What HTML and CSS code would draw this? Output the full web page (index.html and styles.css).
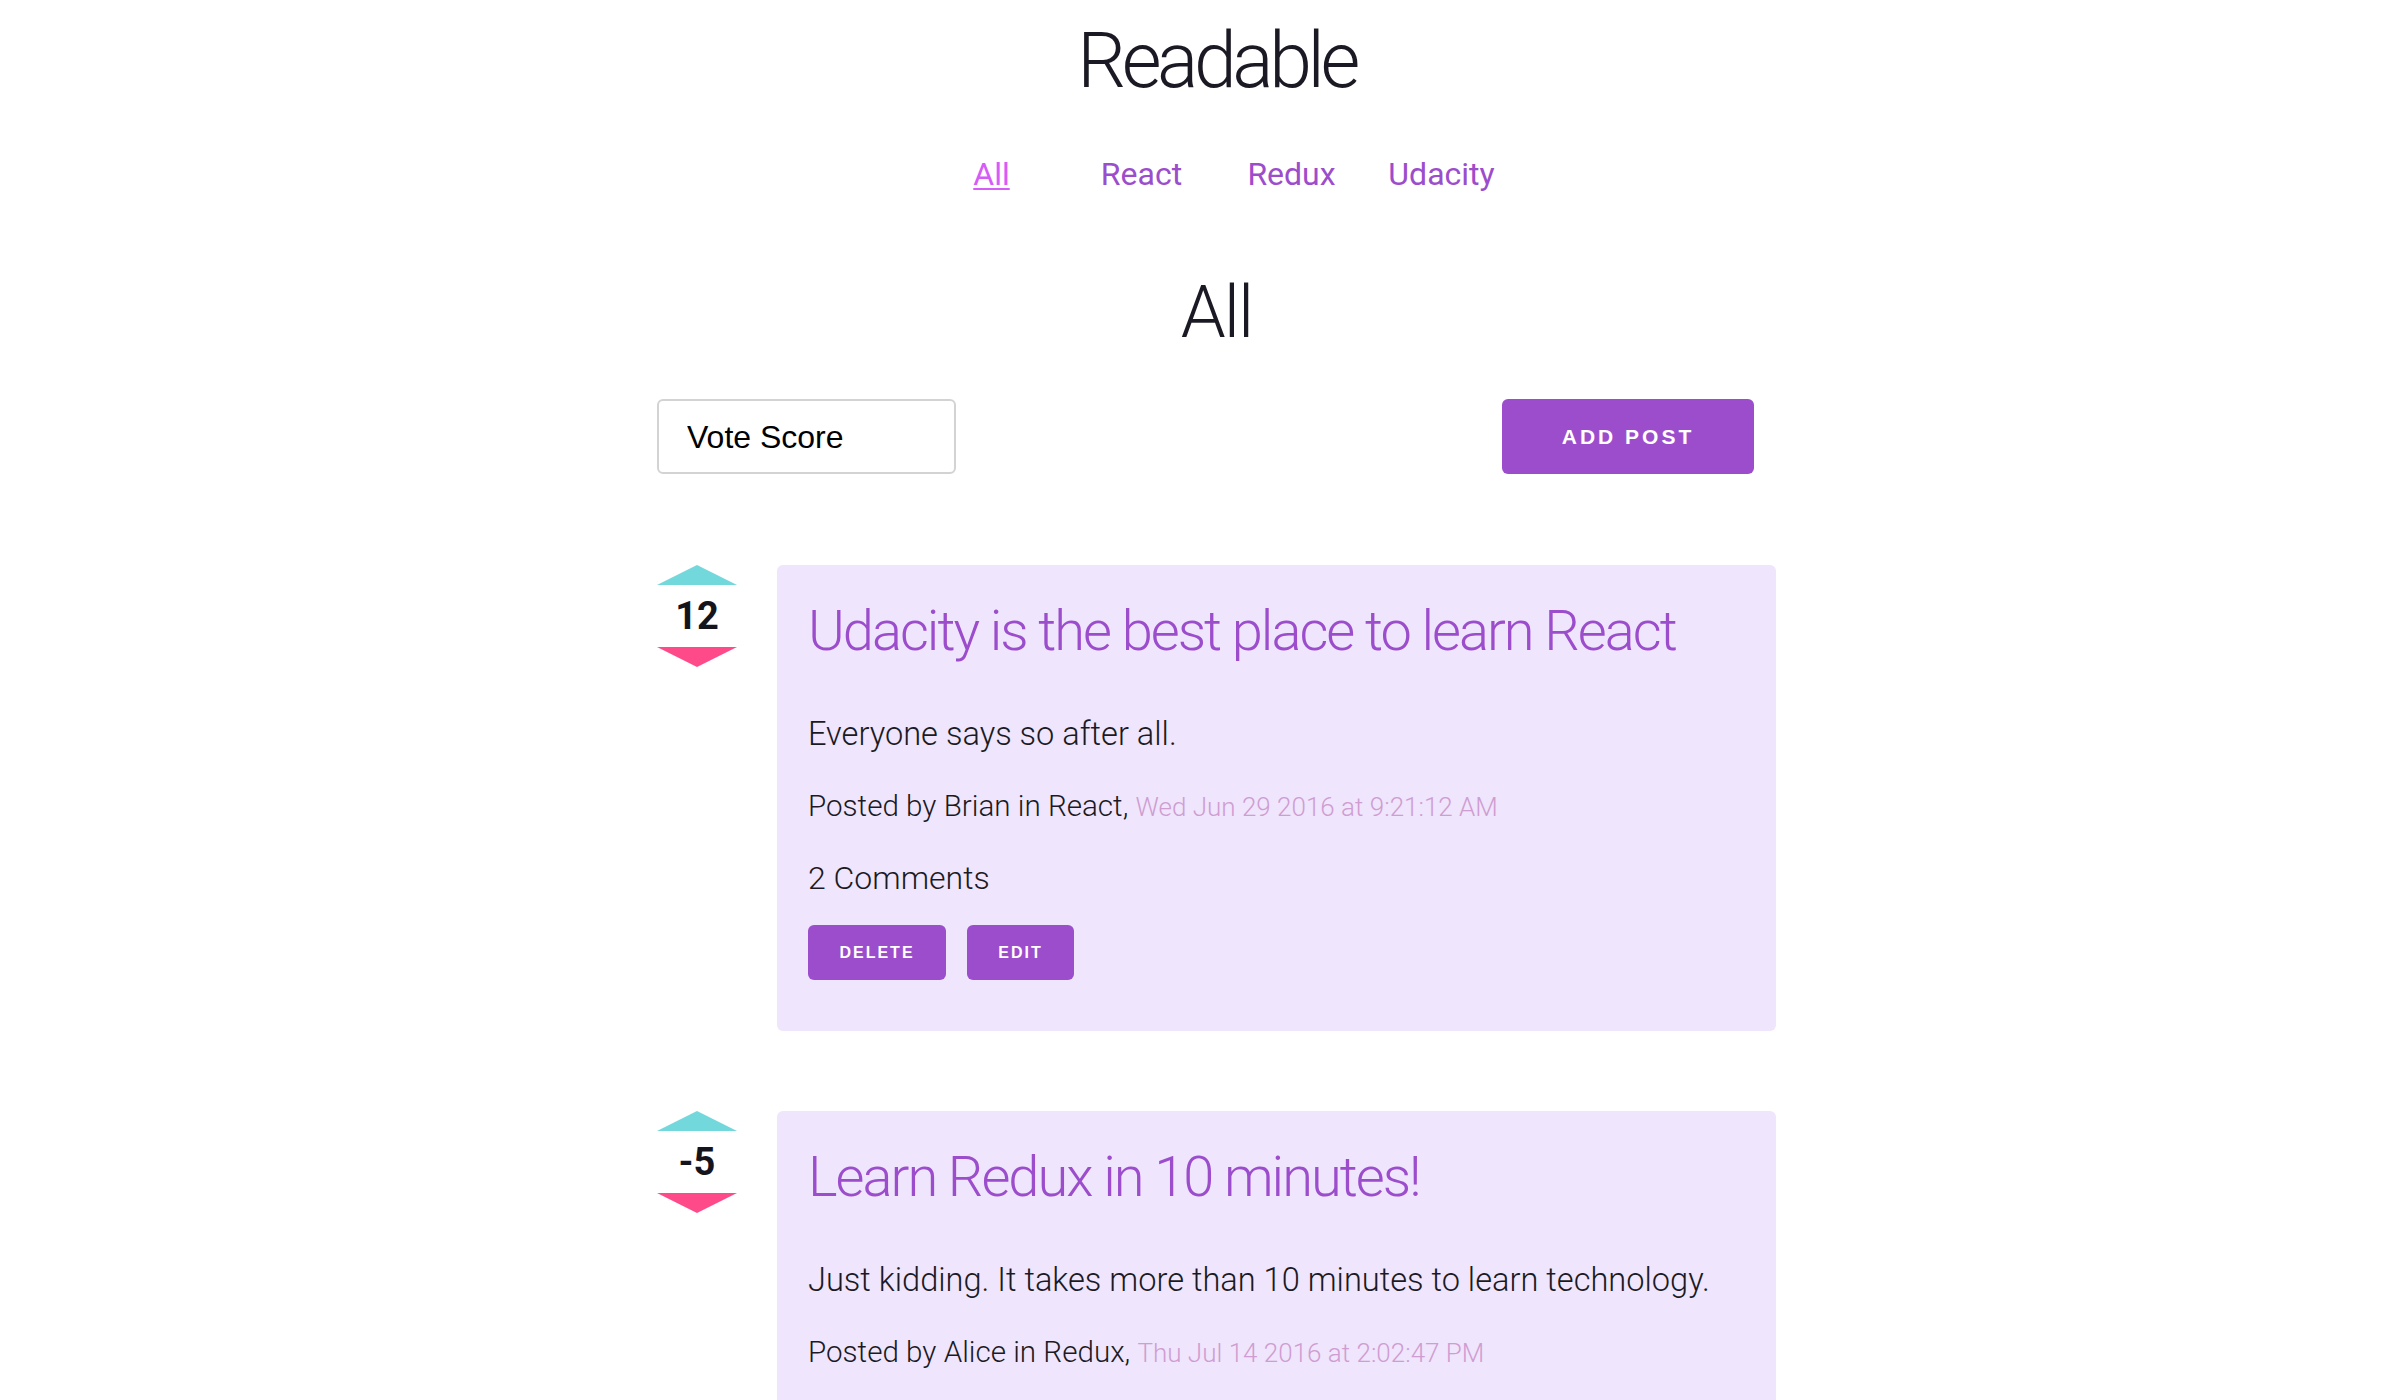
FILE: index.html
```html
<!DOCTYPE html>
<html lang="en">
<head>
<meta charset="utf-8">
<title>Readable</title>
<link rel="stylesheet" href="styles.css">
</head>
<body>
<div class="app">
  <header class="header">
    <h1 class="brand">Readable</h1>
    <nav class="nav">
      <a class="nav-link active" href="#">All</a>
      <a class="nav-link" href="#">React</a>
      <a class="nav-link" href="#">Redux</a>
      <a class="nav-link" href="#">Udacity</a>
    </nav>
  </header>
  <main class="main">
    <h2 class="category-title">All</h2>
    <div class="toolbar">
      <select class="sort-select">
        <option>Vote Score</option>
        <option>Timestamp</option>
      </select>
      <button class="btn btn-large">ADD POST</button>
    </div>
    <ul class="posts">
      <li class="post-row">
        <div class="vote">
          <span class="arrow-up"></span>
          <span class="vote-score">12</span>
          <span class="arrow-down"></span>
        </div>
        <article class="post-card">
          <h3 class="post-title">Udacity is the best place to learn React</h3>
          <p class="post-body">Everyone says so after all.</p>
          <p class="post-meta">Posted by Brian in React, <span class="post-date">Wed Jun 29 2016 at 9:21:12 AM</span></p>
          <p class="post-comments">2 Comments</p>
          <div class="post-actions">
            <button class="btn btn-small btn-delete">DELETE</button>
            <button class="btn btn-small btn-edit">EDIT</button>
          </div>
        </article>
      </li>
      <li class="post-row">
        <div class="vote">
          <span class="arrow-up"></span>
          <span class="vote-score">-5</span>
          <span class="arrow-down"></span>
        </div>
        <article class="post-card">
          <h3 class="post-title">Learn Redux in 10 minutes!</h3>
          <p class="post-body">Just kidding. It takes more than 10 minutes to learn technology.</p>
          <p class="post-meta">Posted by Alice in Redux, <span class="post-date">Thu Jul 14 2016 at 2:02:47 PM</span></p>
          <p class="post-comments">0 Comments</p>
          <div class="post-actions">
            <button class="btn btn-small btn-delete">DELETE</button>
            <button class="btn btn-small btn-edit">EDIT</button>
          </div>
        </article>
      </li>
    </ul>
  </main>
</div>
</body>
</html>
```

FILE: styles.css
```css
* {
  box-sizing: border-box;
}

html, body {
  margin: 0;
  padding: 0;
  background: #ffffff;
}

body {
  font-family: Roboto, "Noto Sans", sans-serif;
  color: #1b1a24;
  padding-left: 33px;
}

.app {
  display: flex;
  flex-direction: column;
  align-items: center;
}

.header {
  display: flex;
  flex-direction: column;
  align-items: center;
}

.brand {
  margin: 23px 0 0;
  font-size: 77px;
  line-height: 77px;
  font-weight: 300;
  letter-spacing: -4.4px;
  color: #1b1a24;
}

.nav {
  display: flex;
  margin-top: 54px;
}

.nav-link {
  display: block;
  width: 150px;
  text-align: center;
  font-size: 32px;
  line-height: 40px;
  font-weight: 400;
  color: #9c4dcc;
  text-decoration: none;
}

.nav-link.active {
  color: #d65cf8;
  text-decoration: underline;
  text-underline-offset: 3px;
  text-decoration-thickness: 2px;
}

.main {
  width: 1119px;
  display: flex;
  flex-direction: column;
}

.category-title {
  margin: 83px 0 0;
  text-align: center;
  font-size: 72px;
  line-height: 72px;
  font-weight: 300;
  letter-spacing: -2px;
  color: #1b1a24;
}

.toolbar {
  margin-top: 50px;
  margin-right: 22px;
  display: flex;
  justify-content: space-between;
  align-items: center;
}

.sort-select {
  -webkit-appearance: none;
  appearance: none;
  width: 299px;
  height: 75px;
  padding: 0 0 0 28px;
  border: 2px solid #d3d3d3;
  border-radius: 6px;
  background: #ffffff;
  font-family: "Liberation Sans", Arial, sans-serif;
  font-size: 32px;
  color: #000000;
}

.btn {
  border: none;
  border-radius: 6px;
  background: #9c4dcc;
  color: #ffffff;
  font-family: "Liberation Sans", Arial, sans-serif;
  font-weight: 700;
  cursor: pointer;
  padding: 0;
}

.btn-large {
  width: 252px;
  height: 75px;
  font-size: 21px;
  letter-spacing: 3px;
}

.btn-small {
  height: 55px;
  font-size: 16px;
  letter-spacing: 2px;
}

.btn-delete {
  width: 138px;
}

.btn-edit {
  width: 107px;
}

.posts {
  list-style: none;
  margin: 91px 0 0;
  padding: 0;
  display: flex;
  flex-direction: column;
  gap: 80px;
}

.post-row {
  display: flex;
  align-items: flex-start;
  gap: 40px;
}

.vote {
  width: 80px;
  flex: none;
  display: flex;
  flex-direction: column;
  align-items: center;
  gap: 12px;
}

.arrow-up {
  display: block;
  width: 0;
  height: 0;
  border-left: 40px solid transparent;
  border-right: 40px solid transparent;
  border-bottom: 20px solid #72d8dc;
}

.arrow-down {
  display: block;
  width: 0;
  height: 0;
  border-left: 40px solid transparent;
  border-right: 40px solid transparent;
  border-top: 20px solid #ff4a8a;
}

.vote-score {
  font-size: 38px;
  line-height: 38px;
  font-weight: 700;
  color: #14141c;
}

.post-card {
  width: 1000px;
  background: #efe5fd;
  border-radius: 6px;
  padding: 33px 31px 51px;
}

.post-title {
  margin: 0;
  font-size: 56px;
  line-height: 66px;
  font-weight: 300;
  color: #9c4dcc;
  letter-spacing: -2px;
}

.post-body {
  margin: 50px 0 0;
  font-size: 32.6px;
  line-height: 40px;
  font-weight: 300;
}

.post-meta {
  margin: 34px 0 0;
  font-size: 29.6px;
  line-height: 36px;
  font-weight: 300;
}

.post-date {
  color: #cf9dd1;
  font-size: 26px;
}

.post-comments {
  margin: 35px 0 0;
  font-size: 32px;
  line-height: 36px;
  font-weight: 300;
}

.post-actions {
  margin-top: 29px;
  display: flex;
  gap: 21px;
}
```
